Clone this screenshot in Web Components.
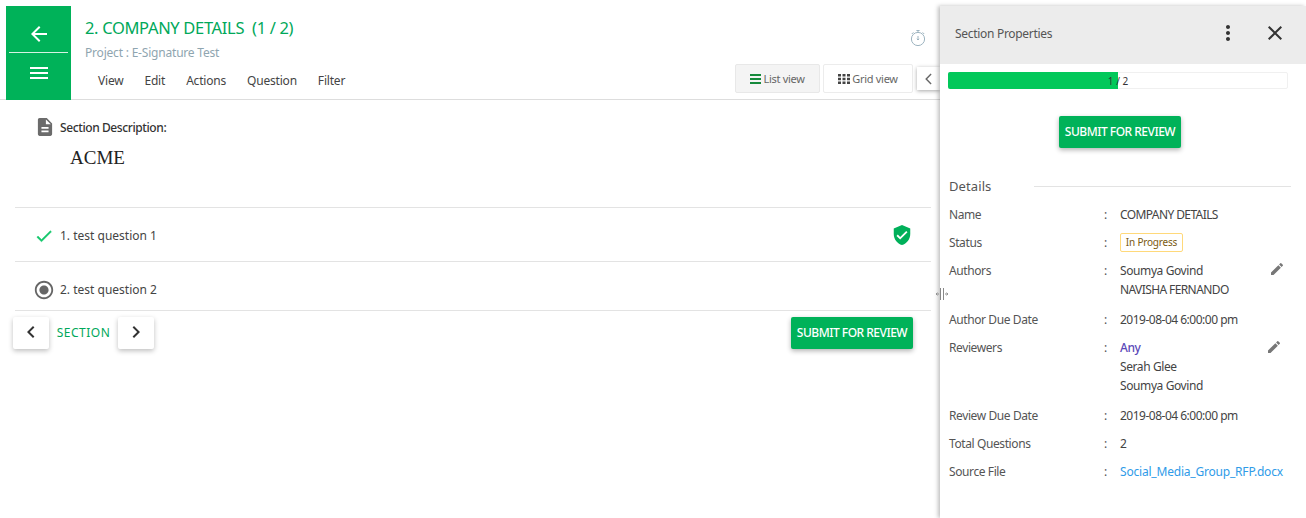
<!DOCTYPE html>
<html>
<head>
<meta charset="utf-8">
<title>Section</title>
<style>
  html, body { margin: 0; padding: 0; height: 100%; background: #fff; }
  body { font-family: "Noto Sans", sans-serif; font-size: 12px; letter-spacing: -.4px; color: #444; overflow: hidden; }
</style>
</head>
<body>
<section-page></section-page>

<script>
const icons = {
  back: '<svg width="24" height="24" viewBox="0 0 24 24" fill="#fff"><path d="M20 11H7.83l5.59-5.59L12 4l-8 8 8 8 1.41-1.41L7.83 13H20z"/></svg>',
  menu: '<svg width="24" height="24" viewBox="0 0 24 24" fill="#fff"><path d="M3 18h18v-2H3zm0-5h18v-2H3zm0-7v2h18V6z"/></svg>',
  timer: '<svg width="18" height="18" viewBox="0 0 18 18" fill="none" stroke="#9db4c0" stroke-width="1"><circle cx="9" cy="10" r="6.6"/><path d="M9 1.5v2M7.4 1.5h3.2M2.8 5l1.6-1.6M15.2 5l-1.6-1.6M9 7v3.6"/><path d="M7.8 9.8L9 11l1.2-1.2"/></svg>',
  list: '<svg width="11" height="10" viewBox="0 0 11 10" fill="#168a3c"><path d="M0 0h11v2H0zM0 4h11v2H0zM0 8h11v2H0z"/></svg>',
  grid: '<svg width="12" height="10" viewBox="0 0 12 10" fill="#444"><path d="M0 0h3v2.6H0zM4.500 0h3v2.600h-3zM9 0h3v2.600H9zM0 3.700h3v2.600H0zM4.500 3.700h3v2.600h-3zM9 3.700h3v2.600H9zM0 7.400h3V10H0zM4.500 7.400h3V10h-3zM9 7.400h3V10H9z"/></svg>',
  left: '<svg width="24" height="24" viewBox="0 0 24 24" fill="#333"><path d="M15.41 7.41L14 6l-6 6 6 6 1.41-1.41L10.83 12z"/></svg>',
  thin: '<svg width="24" height="24" viewBox="0 0 24 24" fill="none" stroke="#666" stroke-width="2"><path d="M15 5l-7 7 7 7"/></svg>',
  right: '<svg width="24" height="24" viewBox="0 0 24 24" fill="#333"><path d="M8.59 16.59L10 18l6-6-6-6-1.41 1.41L13.17 12z"/></svg>',
  doc: '<svg width="16" height="20" viewBox="3 1 18 22" fill="#6b6b6b"><path d="M14 2H6c-1.100 0-2 .9-2 2v16c0 1.100.9 2 2 2h12c1.100 0 2-.9 2-2V8l-6-6zm2 16H8v-2h8v2zm0-4H8v-2h8v2zm-3-5V3.500L18.500 9H13z"/></svg>',
  check: '<svg width="20" height="20" viewBox="0 0 24 24" fill="#12c76a" stroke="#12c76a" stroke-width=".5"><path d="M9 16.170L4.830 12l-1.420 1.410L9 19 21 7l-1.410-1.410z"/></svg>',
  radio: '<svg width="22" height="22" viewBox="0 0 24 24" fill="#666"><path d="M12 7c-2.760 0-5 2.240-5 5s2.240 5 5 5 5-2.240 5-5-2.240-5-5-5zm0-5C6.480 2 2 6.480 2 12s4.480 10 10 10 10-4.480 10-10S17.520 2 12 2zm0 18c-4.420 0-8-3.580-8-8s3.580-8 8-8 8 3.580 8 8-3.580 8-8 8z"/></svg>',
  shield: '<svg width="22" height="22" viewBox="0 0 24 24" fill="#00b05a"><path d="M12 1L3 5v6c0 5.550 3.840 10.740 9 12 5.160-1.260 9-6.450 9-12V5l-9-4zm-2 16l-4-4 1.410-1.410L10 14.170l6.590-6.590L18 9l-8 8z"/></svg>',
  dots: '<svg width="24" height="24" viewBox="0 0 24 24" fill="#333"><path d="M12 8c1.100 0 2-.9 2-2s-.9-2-2-2-2 .9-2 2 .9 2 2 2zm0 2c-1.100 0-2 .9-2 2s.9 2 2 2 2-.9 2-2-.9-2-2-2zm0 6c-1.100 0-2 .9-2 2s.9 2 2 2 2-.9 2-2-.9-2-2-2z"/></svg>',
  close: '<svg width="24" height="24" viewBox="0 0 24 24" fill="#333"><path d="M19 6.410L17.590 5 12 10.590 6.410 5 5 6.410 10.590 12 5 17.590 6.410 19 12 13.410 17.590 19 19 17.590 13.410 12z"/></svg>',
  pencil: '<svg width="16" height="16" viewBox="0 0 24 24" fill="#777"><path d="M3 17.250V21h3.750L17.810 9.940l-3.750-3.750L3 17.250zM20.710 7.040a1 1 0 0 0 0-1.410l-2.340-2.340a1 1 0 0 0-1.410 0l-1.830 1.830 3.750 3.750 1.830-1.830z"/></svg>',
  resize: '<svg width="14" height="14" viewBox="0 0 14 14" fill="none" stroke="#888"><path d="M5.500 1v12M8.500 1v12"/><path d="M4 7H1M10 7h3"/><path d="M2.500 5.500L1 7l1.500 1.500M11.500 5.500L13 7l-1.500 1.500" stroke-width=".8"/></svg>'
}

class UiIcon extends HTMLElement {
  constructor() {
    super()
    this.attachShadow({ mode: 'open' }).innerHTML = `
      <style>:host { display: inline-flex; line-height: 0; flex: none; }</style>
      ${ icons[this.getAttribute('name')] }
    `
  }
}

class ActionButton extends HTMLElement {
  constructor() {
    super()
    this.attachShadow({ mode: 'open' }).innerHTML = `
      <style>
        :host {
          display: inline-flex;
          align-items: center;
          justify-content: center;
          box-sizing: border-box;
          width: 122px;
          height: 32px;
          padding-bottom: 1px;
          background: #00b259;
          color: #fff;
          border-radius: 2px;
          font-size: 12px;
          font-weight: 500;
          letter-spacing: -.5px;
          white-space: nowrap;
          box-shadow: 0 2px 5px rgba(0,0,0,.3);
        }
      </style>
      <slot></slot>
    `
  }
}

class NavTile extends HTMLElement {
  constructor() {
    super()
    this.attachShadow({ mode: 'open' }).innerHTML = `
      <style>
        :host {
          display: flex;
          flex-direction: column;
          flex: none;
          width: 65px;
          height: 94px;
          background: #00b259;
          align-items: center;
        }
        .cell { display: flex; align-items: center; justify-content: center; }
        .top { height: 36px; width: 59px; border-bottom: 1px solid #d6f2e3; padding-top: 10px; }
        .bottom { height: 39px; }
      </style>
      <div class="cell top"><ui-icon name="back"></ui-icon></div>
      <div class="cell bottom"><ui-icon name="menu"></ui-icon></div>
    `
  }
}

class ViewToggle extends HTMLElement {
  constructor() {
    super()
    const active = this.hasAttribute('active')
    this.attachShadow({ mode: 'open' }).innerHTML = `
      <style>
        :host {
          display: inline-flex;
          align-items: center;
          justify-content: center;
          gap: 2px;
          box-sizing: border-box;
          height: 29px;
          width: ${ active ? 85 : 90 }px;
          border: 1px solid ${ active ? '#e8e8e8' : '#ececec' };
          border-radius: 2px;
          background: ${ active ? '#f4f4f4' : '#fff' };
          font-size: 11px;
          letter-spacing: -.3px;
          color: #666;
        }
      </style>
      <ui-icon name="${ this.getAttribute('icon') }"></ui-icon><slot></slot>
    `
  }
}

class PageHeader extends HTMLElement {
  constructor() {
    super()
    this.attachShadow({ mode: 'open' }).innerHTML = `
      <style>
        :host {
          display: flex;
          box-sizing: border-box;
          height: 94px;
          margin-top: 6px;
          padding-left: 6px;
          border-bottom: 1px solid #ddd;
        }
        .info { flex: 1; padding-left: 14px; min-width: 0; }
        h1 { margin: 11px 0 0; font-size: 16.5px; line-height: 22px; font-weight: 400; letter-spacing: -.33px; color: #00a85a; white-space: pre; }
        .project { margin-top: 5px; line-height: 17px; letter-spacing: -.2px; color: #8fa5b0; }
        nav { display: flex; gap: 21px; margin-top: 11px; padding-left: 13px; line-height: 17px; letter-spacing: -.2px; color: #444; }
        .tools { display: flex; flex-direction: column; align-items: flex-end; flex: none; }
        .timer { margin: 23px 13px 0 0; height: 18px; }
        .views { display: flex; align-items: center; gap: 3px; margin-top: 17px; }
        .toggle {
          display: flex;
          align-items: center;
          justify-content: center;
          width: 23px;
          height: 23px;
          margin-left: 1px;
          background: #fff;
          box-shadow: 0 1px 4px rgba(0,0,0,.35);
        }
        .toggle ui-icon { transform: scale(.7); }
      </style>
      <nav-tile></nav-tile>
      <div class="info">
        <h1>2. COMPANY DETAILS  (1 / 2)</h1>
        <div class="project">Project : E-Signature Test</div>
        <nav><span>View</span><span>Edit</span><span>Actions</span><span>Question</span><span>Filter</span></nav>
      </div>
      <div class="tools">
        <div class="timer"><ui-icon name="timer"></ui-icon></div>
        <div class="views">
          <view-toggle icon="list" active>List view</view-toggle>
          <view-toggle icon="grid">Grid view</view-toggle>
          <div class="toggle"><ui-icon name="thin"></ui-icon></div>
        </div>
      </div>
    `
  }
}

class QuestionRow extends HTMLElement {
  constructor() {
    super()
    this.attachShadow({ mode: 'open' }).innerHTML = `
      <style>
        :host {
          display: flex;
          align-items: center;
          gap: 6px;
          box-sizing: border-box;
          height: var(--row-height, 54px);
          padding: var(--row-top, 0) 18px 0 19px;
          border-top: 1px solid #e3e3e3;
          letter-spacing: 0;
          color: #444;
        }
        .text { flex: 1; padding-top: 2px; }
        .check { margin-top: 2px; }
        .radio { margin: 3px -1px 0; }
      </style>
      <ui-icon name="${ this.getAttribute('icon') }" class="${ this.getAttribute('icon') }"></ui-icon>
      <span class="text"><slot></slot></span>
      <slot name="end"></slot>
    `
  }
}

class SectionBody extends HTMLElement {
  constructor() {
    super()
    this.attachShadow({ mode: 'open' }).innerHTML = `
      <style>
        :host { display: block; padding: 0 9px 0 15px; }
        .desc { height: 107px; padding-left: 22px; }
        .label { display: flex; align-items: center; gap: 7px; padding-top: 17px; height: 20px; font-weight: 500; color: #333; }
        .acme { margin: 9px 0 0 33px; font: 19px/24px "Liberation Serif", serif; letter-spacing: 0; color: #222; }
        .list { border-bottom: 1px solid #e3e3e3; }
        .second { --row-height: 49px; --row-top: 5px; }
        .foot { display: flex; align-items: center; margin: 6px 18px 0 -2px; }
        .nav-btn {
          display: flex; align-items: center; justify-content: center;
          box-sizing: border-box;
          width: 36px; height: 32px; padding-bottom: 2px; background: #fff; border-radius: 2px;
          box-shadow: 0 2px 5px rgba(0,0,0,.25);
        }
        .sec { width: 69px; padding-bottom: 2px; text-align: center; color: #00a85a; letter-spacing: .5px; }
        .spacer { flex: 1; }
      </style>
      <div class="desc">
        <div class="label"><ui-icon name="doc"></ui-icon><span>Section Description:</span></div>
        <div class="acme">ACME</div>
      </div>
      <div class="list">
        <question-row icon="check">1. test question 1<ui-icon slot="end" name="shield"></ui-icon></question-row>
        <question-row class="second" icon="radio">2. test question 2</question-row>
      </div>
      <div class="foot">
        <div class="nav-btn"><ui-icon name="left"></ui-icon></div>
        <div class="sec">SECTION</div>
        <div class="nav-btn"><ui-icon name="right"></ui-icon></div>
        <div class="spacer"></div>
        <action-button>SUBMIT FOR REVIEW</action-button>
      </div>
    `
  }
}

class DetailRow extends HTMLElement {
  constructor() {
    super()
    this.attachShadow({ mode: 'open' }).innerHTML = `
      <style>
        :host {
          display: grid;
          grid-template-columns: 155px 16px 1fr;
          line-height: 19px;
          padding-bottom: 9px;
          color: #555;
        }
        :host([multi]) { padding-bottom: 11px; }
        .value { display: flex; justify-content: space-between; color: #444; min-width: 0; white-space: nowrap; }
      </style>
      <span>${ this.getAttribute('label') }</span>
      <span>:</span>
      <div class="value"><div><slot></slot></div><slot name="action"></slot></div>
    `
  }
}

class SidePanel extends HTMLElement {
  constructor() {
    super()
    this.attachShadow({ mode: 'open' }).innerHTML = `
      <style>
        :host {
          display: block;
          flex: 0 0 366px;
          margin-top: 6px;
          background: #fff;
          box-shadow: -2px 0 4px rgba(0,0,0,.25);
          position: relative;
        }
        header { display: flex; align-items: center; box-sizing: border-box; height: 58px; padding: 0 19px 4px 15px; background: #ececec; color: #555; gap: 23px; letter-spacing: -.3px; }
        header span { flex: 1; }
        .bar { position: relative; height: 17px; margin: 8px 18px 0 8px; border: 1px solid #f0f0f0; box-sizing: border-box; border-radius: 2px; text-align: center; font-size: 10px; letter-spacing: 0; line-height: 17px; color: #333; }
        .fill { position: absolute; left: -1px; top: -1px; bottom: -1px; width: calc(50% + 1px); background: #02c85a; border-radius: 2px 0 0 2px; }
        .bar b { position: relative; font-weight: 400; }
        .submit { display: flex; justify-content: center; margin: 27px 6px 0 0; }
        .heading { display: flex; align-items: center; margin: 29px 15px 0 9px; font-size: 13px; line-height: 18px; letter-spacing: .1px; color: #555; }
        .heading span { width: 85px; }
        .heading i { flex: 1; border-top: 1px solid #e3e3e3; }
        .rows { margin: 10px 21px 0 9px; }
        .caps { letter-spacing: -.6px; }
        .date { letter-spacing: -.5px; }
        .yellow { display: block; box-sizing: border-box; width: 63px; height: 19px; line-height: 17px; text-align: center; border: 1px solid #ffd97a; border-radius: 2px; font-size: 10px; letter-spacing: -.2px; color: #7a5a10; }
        .any { color: #5b49b8; font-weight: 500; }
        a { color: #2f9be8; text-decoration: none; letter-spacing: -.2px; }
        .shift { margin: 1px 3px 0 0; align-self: flex-start; }
      </style>
      <header>
        <span>Section Properties</span>
        <ui-icon name="dots"></ui-icon>
        <ui-icon name="close"></ui-icon>
      </header>
      <div class="bar"><div class="fill"></div><b>1 / 2</b></div>
      <div class="submit"><action-button>SUBMIT FOR REVIEW</action-button></div>
      <div class="heading"><span>Details</span><i></i></div>
      <div class="rows">
        <detail-row label="Name"><span class="caps">COMPANY DETAILS</span></detail-row>
        <detail-row label="Status"><span class="yellow">In Progress</span></detail-row>
        <detail-row label="Authors" multi>Soumya Govind<br><span class="caps">NAVISHA FERNANDO</span><ui-icon slot="action" name="pencil"></ui-icon></detail-row>
        <detail-row label="Author Due Date"><span class="date">2019-08-04 6:00:00 pm</span></detail-row>
        <detail-row label="Reviewers" multi><span class="any">Any</span><br>Serah Glee<br>Soumya Govind<ui-icon slot="action" class="shift" name="pencil"></ui-icon></detail-row>
        <detail-row label="Review Due Date"><span class="date">2019-08-04 6:00:00 pm</span></detail-row>
        <detail-row label="Total Questions">2</detail-row>
        <detail-row label="Source File"><a>Social_Media_Group_RFP.docx</a></detail-row>
      </div>
    `
  }
}

class SectionPage extends HTMLElement {
  constructor() {
    super()
    this.attachShadow({ mode: 'open' }).innerHTML = `
      <style>
        :host { display: flex; position: relative; height: 518px; width: 1306px; }
        main { flex: 0 0 940px; min-width: 0; }
        .resize { position: absolute; left: 935px; top: 287px; z-index: 2; }
      </style>
      <main>
        <page-header></page-header>
        <section-body></section-body>
      </main>
      <side-panel></side-panel>
      <ui-icon class="resize" name="resize"></ui-icon>
    `
  }
}

customElements.define('ui-icon', UiIcon)
customElements.define('action-button', ActionButton)
customElements.define('nav-tile', NavTile)
customElements.define('view-toggle', ViewToggle)
customElements.define('page-header', PageHeader)
customElements.define('question-row', QuestionRow)
customElements.define('section-body', SectionBody)
customElements.define('detail-row', DetailRow)
customElements.define('side-panel', SidePanel)
customElements.define('section-page', SectionPage)
</script>
</body>
</html>
